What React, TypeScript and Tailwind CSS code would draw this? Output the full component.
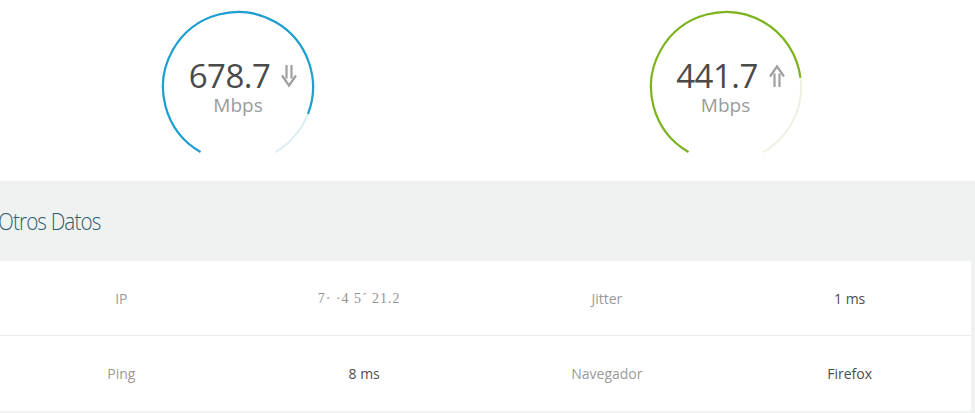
import React from "react";

const C = 2 * Math.PI * 75;

function Gauge({
  value,
  color,
  track,
  sweep,
  up,
}: {
  value: string;
  color: string;
  track: string;
  sweep: number;
  up?: boolean;
}) {
  const arc = (300 / 360) * C;
  const prog = (sweep / 360) * C;
  return (
    <div className="relative w-[156px] h-[156px]">
      <svg width="156" height="156" viewBox="0 0 156 156" className="absolute left-0 top-0">
        <circle
          cx="78"
          cy="78"
          r="75"
          fill="none"
          stroke={track}
          strokeWidth="2"
          strokeDasharray={`${arc} ${C}`}
          transform="rotate(120 78 78)"
        />
        <circle
          cx="78"
          cy="78"
          r="75"
          fill="none"
          stroke={color}
          strokeWidth="2.2"
          strokeDasharray={`${prog} ${C}`}
          transform="rotate(120 78 78)"
        />
      </svg>
      <div className="absolute left-0 top-[50px] w-full flex flex-col items-center">
        <div className="flex items-center pl-[11px] h-[34px]">
          <span className="text-[33px] leading-[34px] tracking-[-0.5px] text-[#4a4a4a]">{value}</span>
          <svg width="18" height="24" viewBox="0 0 18 24" className="ml-[10px]" fill="none" stroke="#a0a0a0" strokeWidth="2.2">
            {up ? (
              <path d="M6.5 23V9.5 M11.5 23V9.5 M2 12.5 L9 2.5 L16 12.5" strokeLinejoin="miter" />
            ) : (
              <path d="M6.5 1V14.5 M11.5 1V14.5 M2 11.5 L9 21.5 L16 11.5" strokeLinejoin="miter" />
            )}
          </svg>
        </div>
        <span className="text-[19px] leading-[24px] text-[#9b9b9b]">Mbps</span>
      </div>
    </div>
  );
}

function Row({ a, b, c, d, last }: { a: string; b: React.ReactNode; c: string; d: string; last?: boolean }) {
  return (
    <div className={`grid grid-cols-4 h-[75px] items-center text-[14px] ${last ? "" : "border-b border-[#ebebeb]"}`}>
      <div className="text-center text-[#9a9a9a]">{a}</div>
      <div className="text-center text-[#4d4d4d]">{b}</div>
      <div className="text-center text-[#9a9a9a]">{c}</div>
      <div className="text-center text-[#4d4d4d]">{d}</div>
    </div>
  );
}

export default function App() {
  return (
    <div
      className="w-[975px] h-[413px] bg-white overflow-hidden"
      style={{ fontFamily: '"Open Sans", "Noto Sans", sans-serif' }}
    >
      <div className="flex h-[181px]">
        <div className="w-[478px] flex justify-center pt-[9px]">
          <Gauge value="678.7" color="#1d9fd0" track="#dcedf5" sweep={260.6} />
        </div>
        <div className="w-[501px] flex justify-center pt-[9px]">
          <Gauge value="441.7" color="#7bb41e" track="#efefe2" sweep={232.5} up />
        </div>
      </div>
      <div className="bg-[#f0f2f1] h-[232px] flex flex-col">
        <div className="h-[80px] flex items-center">
          <span className="inline-block -ml-[2px] origin-left scale-x-[0.86] text-[24px] font-light tracking-[-1px] text-[#2f5d70]">
            Otros Datos
          </span>
        </div>
        <div className="bg-white mr-[4px] w-[971px]">
          <Row
            a="IP"
            b={
              <span
                className="inline-block -ml-[10px] text-[#777] tracking-[1px] opacity-80"
                style={{ fontFamily: '"Liberation Serif", serif' }}
              >
                7· ·4 5ˊ 21.2
              </span>
            }
            c="Jitter"
            d="1 ms"
          />
          <Row a="Ping" b="8 ms" c="Navegador" d="Firefox" last />
        </div>
      </div>
    </div>
  );
}
